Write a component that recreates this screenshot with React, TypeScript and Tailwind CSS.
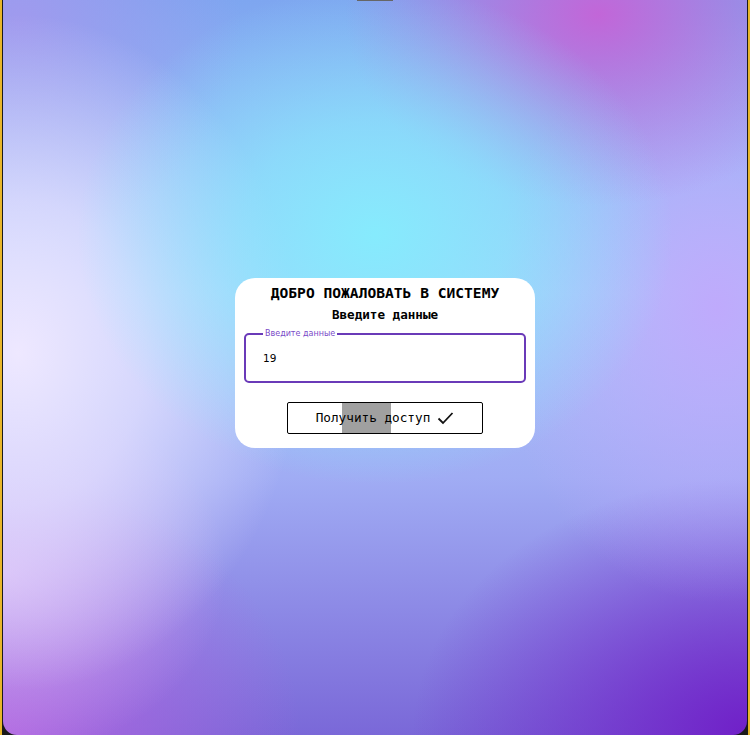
import React from "react";

export default function App() {
  return (
    <div className="w-[750px] h-[735px] bg-[#e8b62a] px-[2px] overflow-hidden">
      <div className="relative w-full h-full bg-[#1a1a1a] px-[1px]">
        <div
          className="relative w-full h-full rounded-b-[14px] overflow-hidden flex items-center justify-center pl-[20px] pb-[10px] bg-[radial-gradient(ellipse_40%_34%_at_50%_32%,#86ebfd_0%,rgba(134,235,253,0.65)_45%,rgba(134,235,253,0)_100%),radial-gradient(ellipse_38%_46%_at_2%_48%,#eee8ff_0%,rgba(230,225,255,0.75)_45%,rgba(230,225,255,0)_100%),radial-gradient(ellipse_30%_25%_at_0%_78%,rgba(215,180,245,0.9)_0%,rgba(215,180,245,0)_100%),radial-gradient(ellipse_34%_26%_at_80%_2%,#c266d8_0%,rgba(192,104,216,0)_100%),radial-gradient(ellipse_40%_35%_at_0%_100%,#b066e0_0%,rgba(176,102,224,0)_100%),radial-gradient(ellipse_30%_40%_at_96%_42%,#bfaafc_0%,rgba(184,176,252,0)_100%),radial-gradient(ellipse_45%_35%_at_100%_100%,#7020c8_0%,rgba(112,32,200,0)_100%),radial-gradient(ellipse_30%_30%_at_2%_3%,#a09aee_0%,rgba(160,154,238,0)_100%),linear-gradient(180deg,#7ea6f0_0%,#acc6fa_40%,#a0acf4_65%,#7a68d8_100%)]"
          style={{ fontFamily: '"DejaVu Sans Mono", monospace' }}
        >
          <div className="absolute top-0 left-[354px] w-[36px] h-[1px] bg-[#666]" />
          <div className="w-[300px] bg-white rounded-[20px] flex flex-col items-center pt-[6px] pb-[14px] px-[9px]">
            <div className="text-[14.6px] font-bold text-black leading-[18px] tracking-[0px]">
              ДОБРО ПОЖАЛОВАТЬ В СИСТЕМУ
            </div>
            <div className="text-[12.6px] font-bold text-black leading-[16px] mt-[5px]">
              Введите данные
            </div>
            <fieldset className="w-[282px] h-[54px] mt-[6px] border-2 border-[#6a3ab8] rounded-[5px] px-[17px] pb-[6px]">
              <legend className="px-[2px] text-[8px] leading-[10px] text-[#7a4ac8]" style={{ fontFamily: '"DejaVu Sans", sans-serif' }}>
                Введите данные
              </legend>
              <div className="text-[10.5px] leading-[14px] text-black mt-[12px]" style={{ fontFamily: '"DejaVu Sans", sans-serif' }}>
                19
              </div>
            </fieldset>
            <button className="relative mt-[19px] w-[196px] h-[32px] border border-black rounded-[2px] bg-white flex items-center justify-center gap-[6px]">
              <span className="absolute left-[54px] top-0 w-[49px] h-full bg-[#a0a0a0]" />
              <span className="relative text-[12.7px] text-black leading-[16px] mr-[1px]">Получить доступ</span>
              <svg className="relative" width="17" height="14" viewBox="0 0 17 14" fill="none">
                <path d="M1.5 7.5 L6 12 L15.5 2" stroke="#111" strokeWidth="1.8" />
              </svg>
            </button>
          </div>
        </div>
      </div>
    </div>
  );
}
